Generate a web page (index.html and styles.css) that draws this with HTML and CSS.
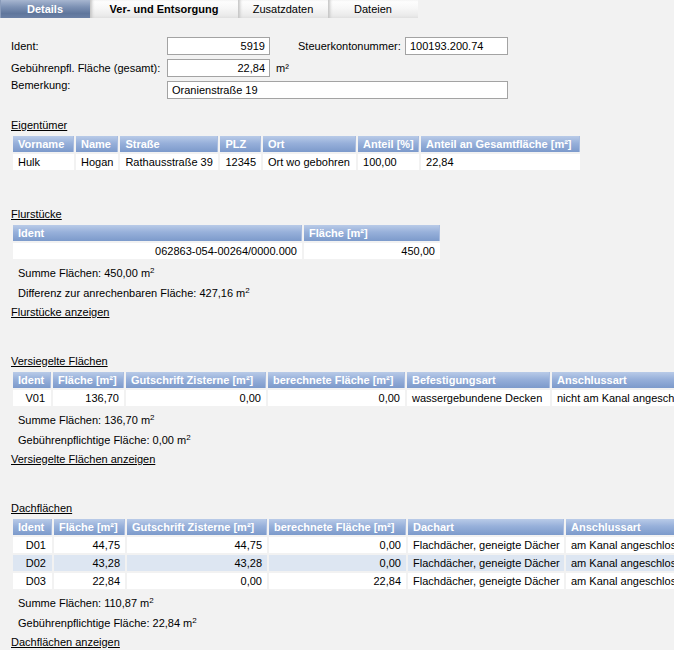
FILE: index.html
```html
<!DOCTYPE html>
<html lang="de">
<head>
<meta charset="utf-8">
<title>Details</title>
<link rel="stylesheet" href="styles.css">
</head>
<body>
<div class="page">
  <div class="tabs">
    <div class="tab active">Details</div>
    <div class="tab t2 bold">Ver- und Entsorgung</div>
    <div class="tab t3">Zusatzdaten</div>
    <div class="tab t4">Dateien</div>
  </div>

  <div class="form">
    <div class="frow">
      <span class="flabel">Ident:</span>
      <input class="field num" value="5919" readonly>
      <span class="flabel2">Steuerkontonummer:</span>
      <input class="field" value="100193.200.74" readonly>
    </div>
    <div class="frow">
      <span class="flabel">Gebührenpfl. Fläche (gesamt):</span>
      <input class="field num" value="22,84" readonly>
      <span class="unit">m²</span>
    </div>
    <div class="frow">
      <span class="flabel up">Bemerkung:</span>
      <input class="field wide" value="Oranienstraße 19" readonly>
    </div>
  </div>

  <div class="section first">
    <div class="heading">Eigentümer</div>
    <table class="grid">
      <tr>
        <th class="w61">Vorname</th><th class="w41">Name</th><th class="w98">Straße</th><th class="w39">PLZ</th><th class="w93">Ort</th><th class="w61">Anteil [%]</th><th class="w159">Anteil an Gesamtfläche [m²]</th>
      </tr>
      <tr>
        <td>Hulk</td><td>Hogan</td><td>Rathausstraße 39</td><td>12345</td><td>Ort wo gebohren</td><td>100,00</td><td>22,84</td>
      </tr>
    </table>
  </div>

  <div class="section flur">
    <div class="heading">Flurstücke</div>
    <table class="grid">
      <tr><th class="w289">Ident</th><th class="w136">Fläche [m²]</th></tr>
      <tr><td class="r">062863-054-00264/0000.000</td><td class="r">450,00</td></tr>
    </table>
    <div class="sum">Summe Flächen: 450,00 m<sup>2</sup></div>
    <div class="sum">Differenz zur anrechenbaren Fläche: 427,16 m<sup>2</sup></div>
    <div class="link">Flurstücke anzeigen</div>
  </div>

  <div class="section">
    <div class="heading">Versiegelte Flächen</div>
    <table class="grid fixed tw703">
      <tr>
        <th class="w38">Ident</th><th class="w71">Fläche [m²]</th><th class="w140">Gutschrift Zisterne [m²]</th><th class="w137">berechnete Fläche [m²]</th><th class="w143">Befestigungsart</th><th class="w160">Anschlussart</th>
      </tr>
      <tr>
        <td class="r id">V01</td><td class="r">136,70</td><td class="r">0,00</td><td class="r">0,00</td><td>wassergebundene Decken</td><td>nicht am Kanal angeschlossen</td>
      </tr>
    </table>
    <div class="sum">Summe Flächen: 136,70 m<sup>2</sup></div>
    <div class="sum">Gebührenpflichtige Fläche: 0,00 m<sup>2</sup></div>
    <div class="link">Versiegelte Flächen anzeigen</div>
  </div>

  <div class="section">
    <div class="heading">Dachflächen</div>
    <table class="grid fixed tw717">
      <tr>
        <th class="w39">Ident</th><th class="w71">Fläche [m²]</th><th class="w140">Gutschrift Zisterne [m²]</th><th class="w137">berechnete Fläche [m²]</th><th class="w156">Dachart</th><th class="w160">Anschlussart</th>
      </tr>
      <tr>
        <td class="r id">D01</td><td class="r">44,75</td><td class="r">44,75</td><td class="r">0,00</td><td>Flachdächer, geneigte Dächer</td><td>am Kanal angeschlossen</td>
      </tr>
      <tr class="alt">
        <td class="r id">D02</td><td class="r">43,28</td><td class="r">43,28</td><td class="r">0,00</td><td>Flachdächer, geneigte Dächer</td><td>am Kanal angeschlossen</td>
      </tr>
      <tr>
        <td class="r id">D03</td><td class="r">22,84</td><td class="r">0,00</td><td class="r">22,84</td><td>Flachdächer, geneigte Dächer</td><td>am Kanal angeschlossen</td>
      </tr>
    </table>
    <div class="sum">Summe Flächen: 110,87 m<sup>2</sup></div>
    <div class="sum">Gebührenpflichtige Fläche: 22,84 m<sup>2</sup></div>
    <div class="link">Dachflächen anzeigen</div>
  </div>
</div>
</body>
</html>
```

FILE: styles.css
```css
html, body {
  margin: 0;
  padding: 0;
  overflow: hidden;
  background: #f2f2f2;
}

body {
  font-family: "Liberation Sans", Arial, sans-serif;
  font-size: 11px;
  color: #000;
}

.page {
  width: 674px;
  overflow: hidden;
}

/* Tabs */
.tabs {
  display: flex;
  height: 18px;
}

.tab {
  box-sizing: border-box;
  height: 18px;
  line-height: 18px;
  text-align: center;
  background: linear-gradient(to bottom, #ffffff 0%, #f7f7f7 45%, #e6e6e6 100%);
  box-shadow: inset 3px 0 3px -1px #c4c4c4;
}

.tab.active {
  width: 90px;
  color: #fff;
  font-weight: bold;
  background: linear-gradient(to bottom, #a7b6d0 0%, #7b90b3 40%, #5f769c 75%, #6a80a5 100%);
  box-shadow: inset 1px 0 0 #8a9cbb;
}

.tab.bold { font-weight: bold; }
.t2 { width: 148px; }
.t3 { width: 90px; }
.t4 { width: 90px; }

/* Form */
.form {
  margin-top: 19px;
  padding-left: 11px;
  display: flex;
  flex-direction: column;
  gap: 4px;
}

.frow {
  display: flex;
  align-items: center;
  height: 18px;
}

.flabel {
  width: 156px;
}

.flabel.up {
  align-self: flex-start;
  margin-top: -3px;
  line-height: 14px;
}

.flabel2 {
  margin-left: 28px;
  width: 107px;
}

.unit {
  margin-left: 6px;
}

.field {
  box-sizing: border-box;
  width: 103px;
  height: 18px;
  margin: 0;
  padding: 0 4px;
  border: 1px solid #a3a3a3;
  background: #fff;
  font-family: "Liberation Sans", Arial, sans-serif;
  font-size: 11px;
  color: #000;
  outline: none;
}

.field.num { text-align: right; }
.field.wide { width: 341px; }

/* Sections */
.section {
  margin-top: 32px;
  padding-left: 11px;
}

.section.first { margin-top: 19px; }
.section.flur { margin-top: 35px; }

.heading {
  line-height: 14px;
  text-decoration: underline;
}

.grid {
  margin-top: 2px;
  margin-left: 0;
  border-collapse: separate;
  border-spacing: 2px;
}

.grid.fixed {
  table-layout: fixed;
}

.tw703 { width: 703px; }
.tw717 { width: 717px; }

.grid th,
.grid td {
  box-sizing: border-box;
  height: 16px;
  padding: 0 5px;
  white-space: nowrap;
  overflow: hidden;
  text-align: left;
  line-height: 14px;
}

.grid th {
  color: #fff;
  font-weight: bold;
  background: linear-gradient(to bottom, #b9cbe8 0%, #97b0da 45%, #7c9acb 100%);
  box-shadow: inset -1px 0 0 #a9bde0;
}

.grid td {
  background: #fff;
}

.grid tr.alt td {
  background: #dde6f2;
}

.grid td.r { text-align: right; }
.grid td.id { padding-right: 6px; }

.w38 { width: 38px; }
.w39 { width: 39px; }
.w41 { width: 41px; }
.w61 { width: 61px; }
.w71 { width: 71px; }
.w93 { width: 93px; }
.w98 { width: 98px; }
.w136 { width: 136px; }
.w137 { width: 137px; }
.w140 { width: 140px; }
.w143 { width: 143px; }
.w156 { width: 156px; }
.w159 { width: 159px; }
.w160 { width: 160px; }
.w289 { width: 289px; }

.sum {
  line-height: 20px;
  padding-left: 7px;
}

.grid + .sum {
  margin-top: 2px;
}

.sum sup {
  font-size: 8px;
  line-height: 0;
  vertical-align: 4px;
}

.link {
  line-height: 19px;
  text-decoration: underline;
}
```
